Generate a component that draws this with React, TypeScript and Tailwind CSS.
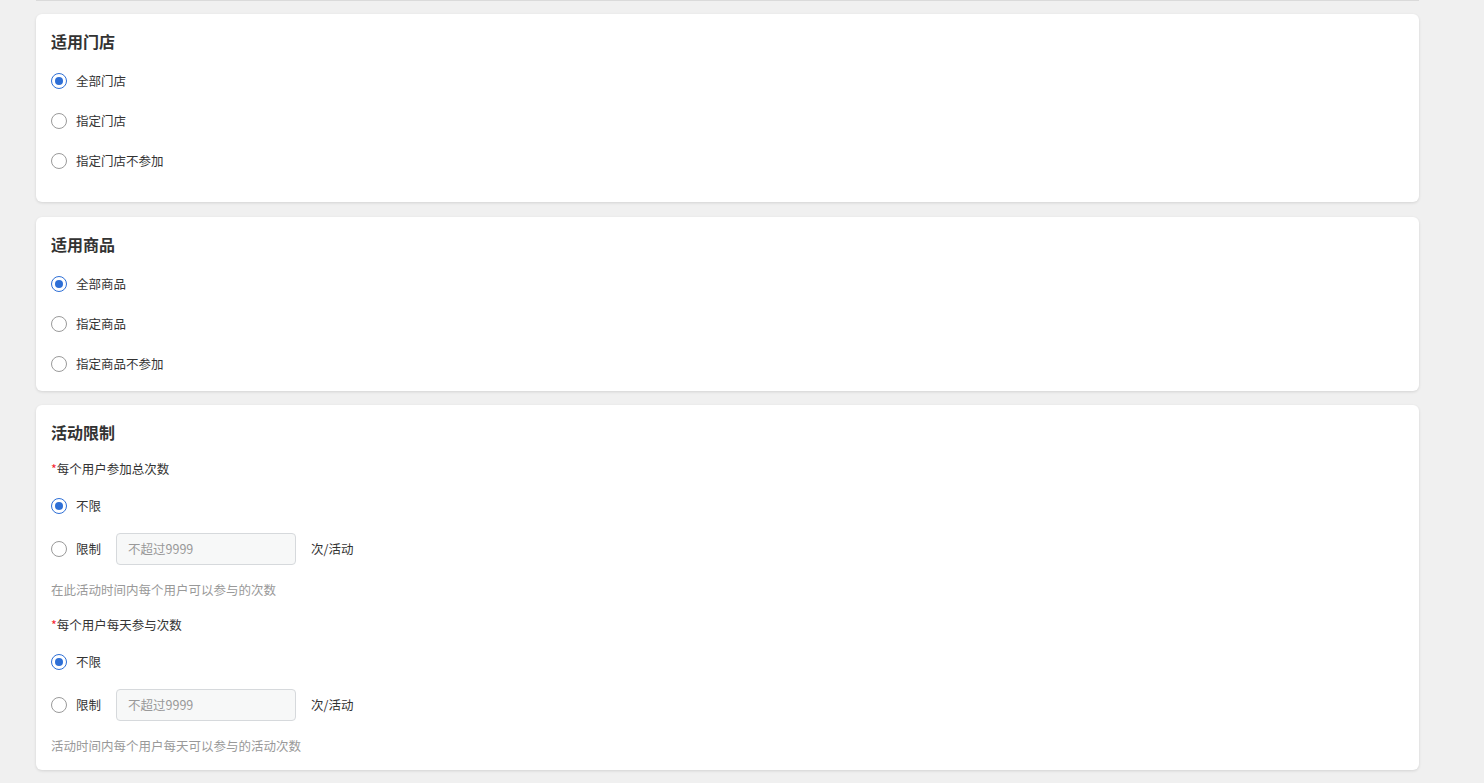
import React from "react";

const font = { fontFamily: '"Noto Sans CJK SC", "Noto Sans", sans-serif' };

function Radio({ checked, label }: { checked?: boolean; label: string }) {
  return (
    <div className="flex items-center h-[40px]">
      <span
        className={
          "w-[16px] h-[16px] rounded-full border flex items-center justify-center bg-white " +
          (checked ? "border-[#2e6fd6]" : "border-[#9a9a9a]")
        }
      >
        {checked && <span className="w-[8px] h-[8px] rounded-full bg-[#2e6fd6]" />}
      </span>
      <span className="ml-[9px] text-[12.5px] text-[#333] leading-[20px]">{label}</span>
    </div>
  );
}

function LimitRow() {
  return (
    <div className="flex items-center h-[46px]">
      <span className="w-[16px] h-[16px] rounded-full border border-[#9a9a9a] bg-white" />
      <span className="ml-[9px] text-[12.5px] text-[#333] leading-[20px]">限制</span>
      <div className="ml-[15px] w-[180px] h-[32px] rounded-[4px] border border-[#d6d9dc] bg-[#f7f8f8] flex items-center pl-[11px] text-[12.5px] text-[#999]">
        不超过9999
      </div>
      <span className="ml-[15px] text-[12.5px] text-[#333] leading-[20px]">次/活动</span>
    </div>
  );
}

function Card({ title, children, className }: { title: string; children: React.ReactNode; className?: string }) {
  return (
    <div className={"bg-white rounded-[6px] shadow-[0_1px_3px_rgba(0,0,0,0.12)] px-[15px] pt-[14px] " + (className ?? "")}>
      <div className="text-[16px] font-bold text-[#333] leading-[27px]">{title}</div>
      {children}
    </div>
  );
}

function Group({ label, help, first }: { label: string; help: string; first?: boolean }) {
  return (
    <div className={first ? "mt-[13px]" : "mt-[15px]"}>
      <div className="text-[12.5px] text-[#333] leading-[20px]">
        <span className="text-[#f5222d]">*</span>
        {label}
      </div>
      <div className="mt-[7px]">
        <Radio checked label="不限" />
      </div>
      <LimitRow />
      <div className="mt-[8px] text-[12.5px] text-[#999] leading-[20px]">{help}</div>
    </div>
  );
}

export default function App() {
  return (
    <div className="min-h-[783px] bg-[#f0f0f0] pl-[36px] pr-[65px]" style={font}>
      <div className="h-[1px] bg-[#dadada]" />
      <Card title="适用门店" className="mt-[13px] pb-[21px]">
        <div className="mt-[6px]">
          <Radio checked label="全部门店" />
          <Radio label="指定门店" />
          <Radio label="指定门店不参加" />
        </div>
      </Card>
      <Card title="适用商品" className="mt-[15px] pb-[7px]">
        <div className="mt-[6px]">
          <Radio checked label="全部商品" />
          <Radio label="指定商品" />
          <Radio label="指定商品不参加" />
        </div>
      </Card>
      <Card title="活动限制" className="mt-[14px] pb-[14px]">
        <Group first label="每个用户参加总次数" help="在此活动时间内每个用户可以参与的次数" />
        <Group label="每个用户每天参与次数" help="活动时间内每个用户每天可以参与的活动次数" />
      </Card>
    </div>
  );
}
